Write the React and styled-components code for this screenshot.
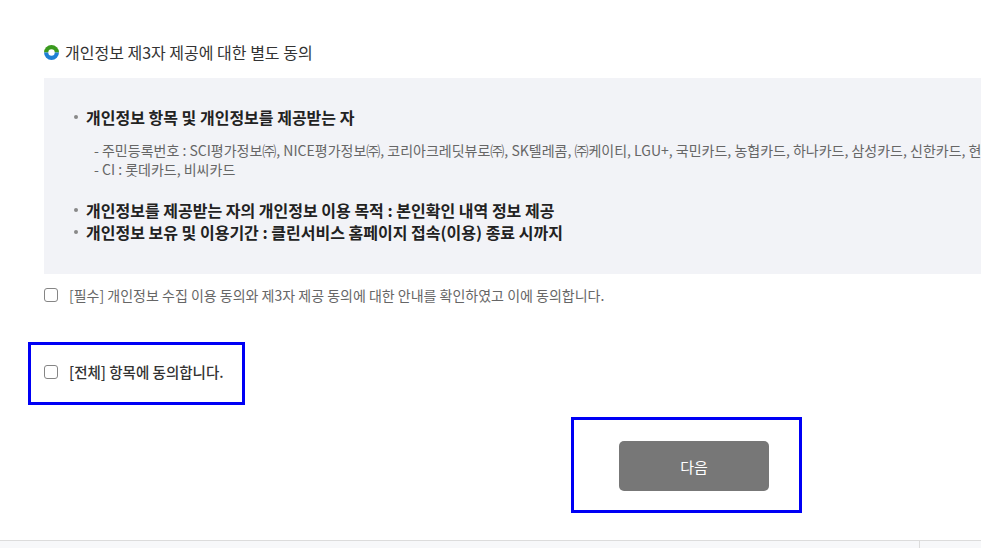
import React from "react";
import styled, { createGlobalStyle } from "styled-components";

const Global = createGlobalStyle`
  html, body { margin: 0; padding: 0; background: #fff; overflow: hidden; }
  body { font-family: "Noto Sans CJK KR", "Noto Sans", sans-serif; color: #333; }
  ul { margin: 0; padding: 0; list-style: none; }
`;

const Page = styled.div`
  width: 981px;
  height: 548px;
  display: flex;
  flex-direction: column;
  overflow: hidden;
`;

const Main = styled.main`
  padding: 42px 0 0 44px;
  display: flex;
  flex-direction: column;
  align-items: flex-start;
`;

const SectionTitle = styled.h3`
  margin: 0;
  display: flex;
  align-items: center;
  gap: 6px;
  height: 20px;
  font-size: 16px;
  font-weight: 400;
  color: #333;
  white-space: nowrap;
`;

const InfoBox = styled.div`
  margin-top: 16px;
  width: 1400px;
  box-sizing: border-box;
  background: #f2f3f7;
  padding: 28px 30px 31px 30px;
  white-space: nowrap;
`;

const MainItem = styled.li`
  position: relative;
  padding-left: 12px;
  font-size: 16px;
  line-height: 22px;
  font-weight: 700;
  color: #222;
  &::before {
    content: "";
    position: absolute;
    left: 0;
    top: 9px;
    width: 4px;
    height: 4px;
    border-radius: 50%;
    background: #888;
  }
`;

const MainList = styled.ul`
  & + & { margin-top: 20px; }
`;

const SubList = styled.ul`
  margin: 13px 0 0 8px;
`;

const SubItem = styled.li`
  font-size: 14px;
  line-height: 19px;
  font-weight: 400;
  color: #666;
`;

const CheckRow = styled.label`
  display: flex;
  align-items: center;
  gap: 11px;
  margin-top: ${(p) => p.$mt || 0}px;
  font-size: ${(p) => (p.$strong ? 14.5 : 14)}px;
  font-weight: ${(p) => (p.$strong ? 500 : 400)};
  color: ${(p) => (p.$strong ? "#333" : "#666")};
  line-height: 20px;
  white-space: nowrap;
`;

const Box = styled.span`
  width: 12px;
  height: 12px;
  border: 1px solid #858585;
  border-radius: 3px;
  background: #fff;
  flex: none;
`;

const Highlight = styled.div`
  border: 3px solid #0000f5;
  box-sizing: border-box;
  width: ${(p) => p.$w}px;
  height: ${(p) => p.$h}px;
  margin: ${(p) => p.$m};
  padding: ${(p) => p.$p};
  display: flex;
  align-items: flex-start;
`;

const NextButton = styled.button`
  width: 150px;
  height: 50px;
  border: 0;
  border-radius: 5px;
  background: #777777;
  color: #fff;
  font-family: inherit;
  font-size: 15px;
  font-weight: 400;
  cursor: pointer;
`;

const Footer = styled.footer`
  margin-top: auto;
  height: 7px;
  border-top: 1px solid #dcdcdc;
  background: #f7f8fa;
  display: flex;
`;

const FooterMain = styled.div`
  width: 919px;
  border-right: 1px solid #dcdcdc;
`;

const DotIcon = () => (
  <svg width="15" height="15" viewBox="0 0 15 15" aria-hidden="true">
    <path d="M0 7.5 A7.5 7.5 0 0 1 15 7.5 Z" fill="#3a9a1e" />
    <path d="M0 7.5 A7.5 7.5 0 0 0 15 7.5 Z" fill="#1e7fd4" />
    <circle cx="7.5" cy="7.5" r="3.2" fill="#fff" />
  </svg>
);

export default function App() {
  return (
    <Page>
      <Global />
      <Main>
        <SectionTitle>
          <DotIcon />
          개인정보 제3자 제공에 대한 별도 동의
        </SectionTitle>
        <InfoBox>
          <MainList>
            <MainItem>
              개인정보 항목 및 개인정보를 제공받는 자
              <SubList>
                <SubItem>
                  - 주민등록번호 : SCI평가정보㈜, NICE평가정보㈜, 코리아크레딧뷰로㈜, SK텔레콤, ㈜케이티, LGU+, 국민카드, 농협카드, 하나카드, 삼성카드, 신한카드, 현대카드, 우리카드
                </SubItem>
                <SubItem>- CI : 롯데카드, 비씨카드</SubItem>
              </SubList>
            </MainItem>
          </MainList>
          <MainList>
            <MainItem>개인정보를 제공받는 자의 개인정보 이용 목적 : 본인확인 내역 정보 제공</MainItem>
            <MainItem>개인정보 보유 및 이용기간 : 클린서비스 홈페이지 접속(이용) 종료 시까지</MainItem>
          </MainList>
        </InfoBox>
        <CheckRow $mt={11}>
          <Box />
          [필수] 개인정보 수집 이용 동의와 제3자 제공 동의에 대한 안내를 확인하였고 이에 동의합니다.
        </CheckRow>
        <Highlight $w={217} $h={63} $m="37px 0 0 -16px" $p="17px 0 0 13px">
          <CheckRow $strong>
            <Box />
            [전체] 항목에 동의합니다.
          </CheckRow>
        </Highlight>
        <Highlight $w={231} $h={96} $m="12px 0 0 527px" $p="21px 0 0 45px">
          <NextButton>다음</NextButton>
        </Highlight>
      </Main>
      <Footer>
        <FooterMain />
      </Footer>
    </Page>
  );
}
